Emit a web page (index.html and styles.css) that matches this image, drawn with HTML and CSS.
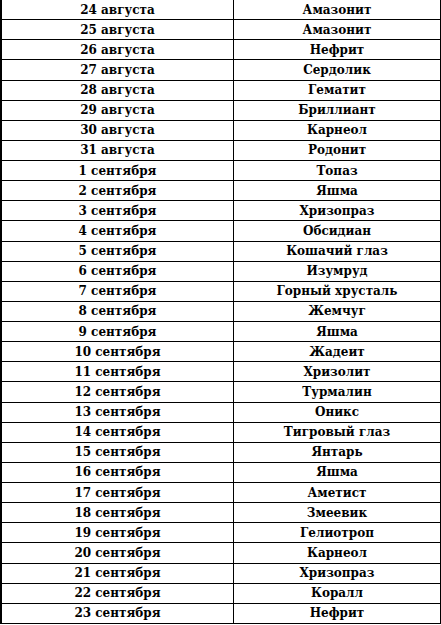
FILE: index.html
```html
<!DOCTYPE html>
<html lang="ru">
<head>
<meta charset="utf-8">
<link rel="stylesheet" href="styles.css">
</head>
<body>
<table class="stones">
<tbody>
<tr><td>24 августа</td><td>Амазонит</td></tr>
<tr><td>25 августа</td><td>Амазонит</td></tr>
<tr><td>26 августа</td><td>Нефрит</td></tr>
<tr><td>27 августа</td><td>Сердолик</td></tr>
<tr><td>28 августа</td><td>Гематит</td></tr>
<tr><td>29 августа</td><td>Бриллиант</td></tr>
<tr><td>30 августа</td><td>Карнеол</td></tr>
<tr><td>31 августа</td><td>Родонит</td></tr>
<tr><td>1 сентября</td><td>Топаз</td></tr>
<tr><td>2 сентября</td><td>Яшма</td></tr>
<tr><td>3 сентября</td><td>Хризопраз</td></tr>
<tr><td>4 сентября</td><td>Обсидиан</td></tr>
<tr><td>5 сентября</td><td>Кошачий глаз</td></tr>
<tr><td>6 сентября</td><td>Изумруд</td></tr>
<tr><td>7 сентября</td><td>Горный хрусталь</td></tr>
<tr><td>8 сентября</td><td>Жемчуг</td></tr>
<tr><td>9 сентября</td><td>Яшма</td></tr>
<tr><td>10 сентября</td><td>Жадеит</td></tr>
<tr><td>11 сентября</td><td>Хризолит</td></tr>
<tr><td>12 сентября</td><td>Турмалин</td></tr>
<tr><td>13 сентября</td><td>Оникс</td></tr>
<tr><td>14 сентября</td><td>Тигровый глаз</td></tr>
<tr><td>15 сентября</td><td>Янтарь</td></tr>
<tr><td>16 сентября</td><td>Яшма</td></tr>
<tr><td>17 сентября</td><td>Аметист</td></tr>
<tr><td>18 сентября</td><td>Змеевик</td></tr>
<tr><td>19 сентября</td><td>Гелиотроп</td></tr>
<tr><td>20 сентября</td><td>Карнеол</td></tr>
<tr><td>21 сентября</td><td>Хризопраз</td></tr>
<tr><td>22 сентября</td><td>Коралл</td></tr>
<tr><td>23 сентября</td><td>Нефрит</td></tr>
</tbody>
</table>
</body>
</html>
```
FILE: styles.css
```css
html, body {
  margin: 0;
  padding: 0;
  background: #ffffff;
}
body {
  font-family: "DejaVu Serif", "Liberation Serif", serif;
  color: #000000;
}
.stones {
  border-collapse: collapse;
  width: 441px;
  table-layout: fixed;
  border-left: 2px solid #000;
}
.stones td {
  height: 19.13px;
  padding: 0;
  text-align: center;
  vertical-align: middle;
  font-size: 12px;
  font-weight: bold;
  line-height: 14px;
  border-bottom: 1px solid #000;
  border-right: 1px solid #000;
  white-space: nowrap;
}
.stones td:first-child {
  width: 231px;
}
```
